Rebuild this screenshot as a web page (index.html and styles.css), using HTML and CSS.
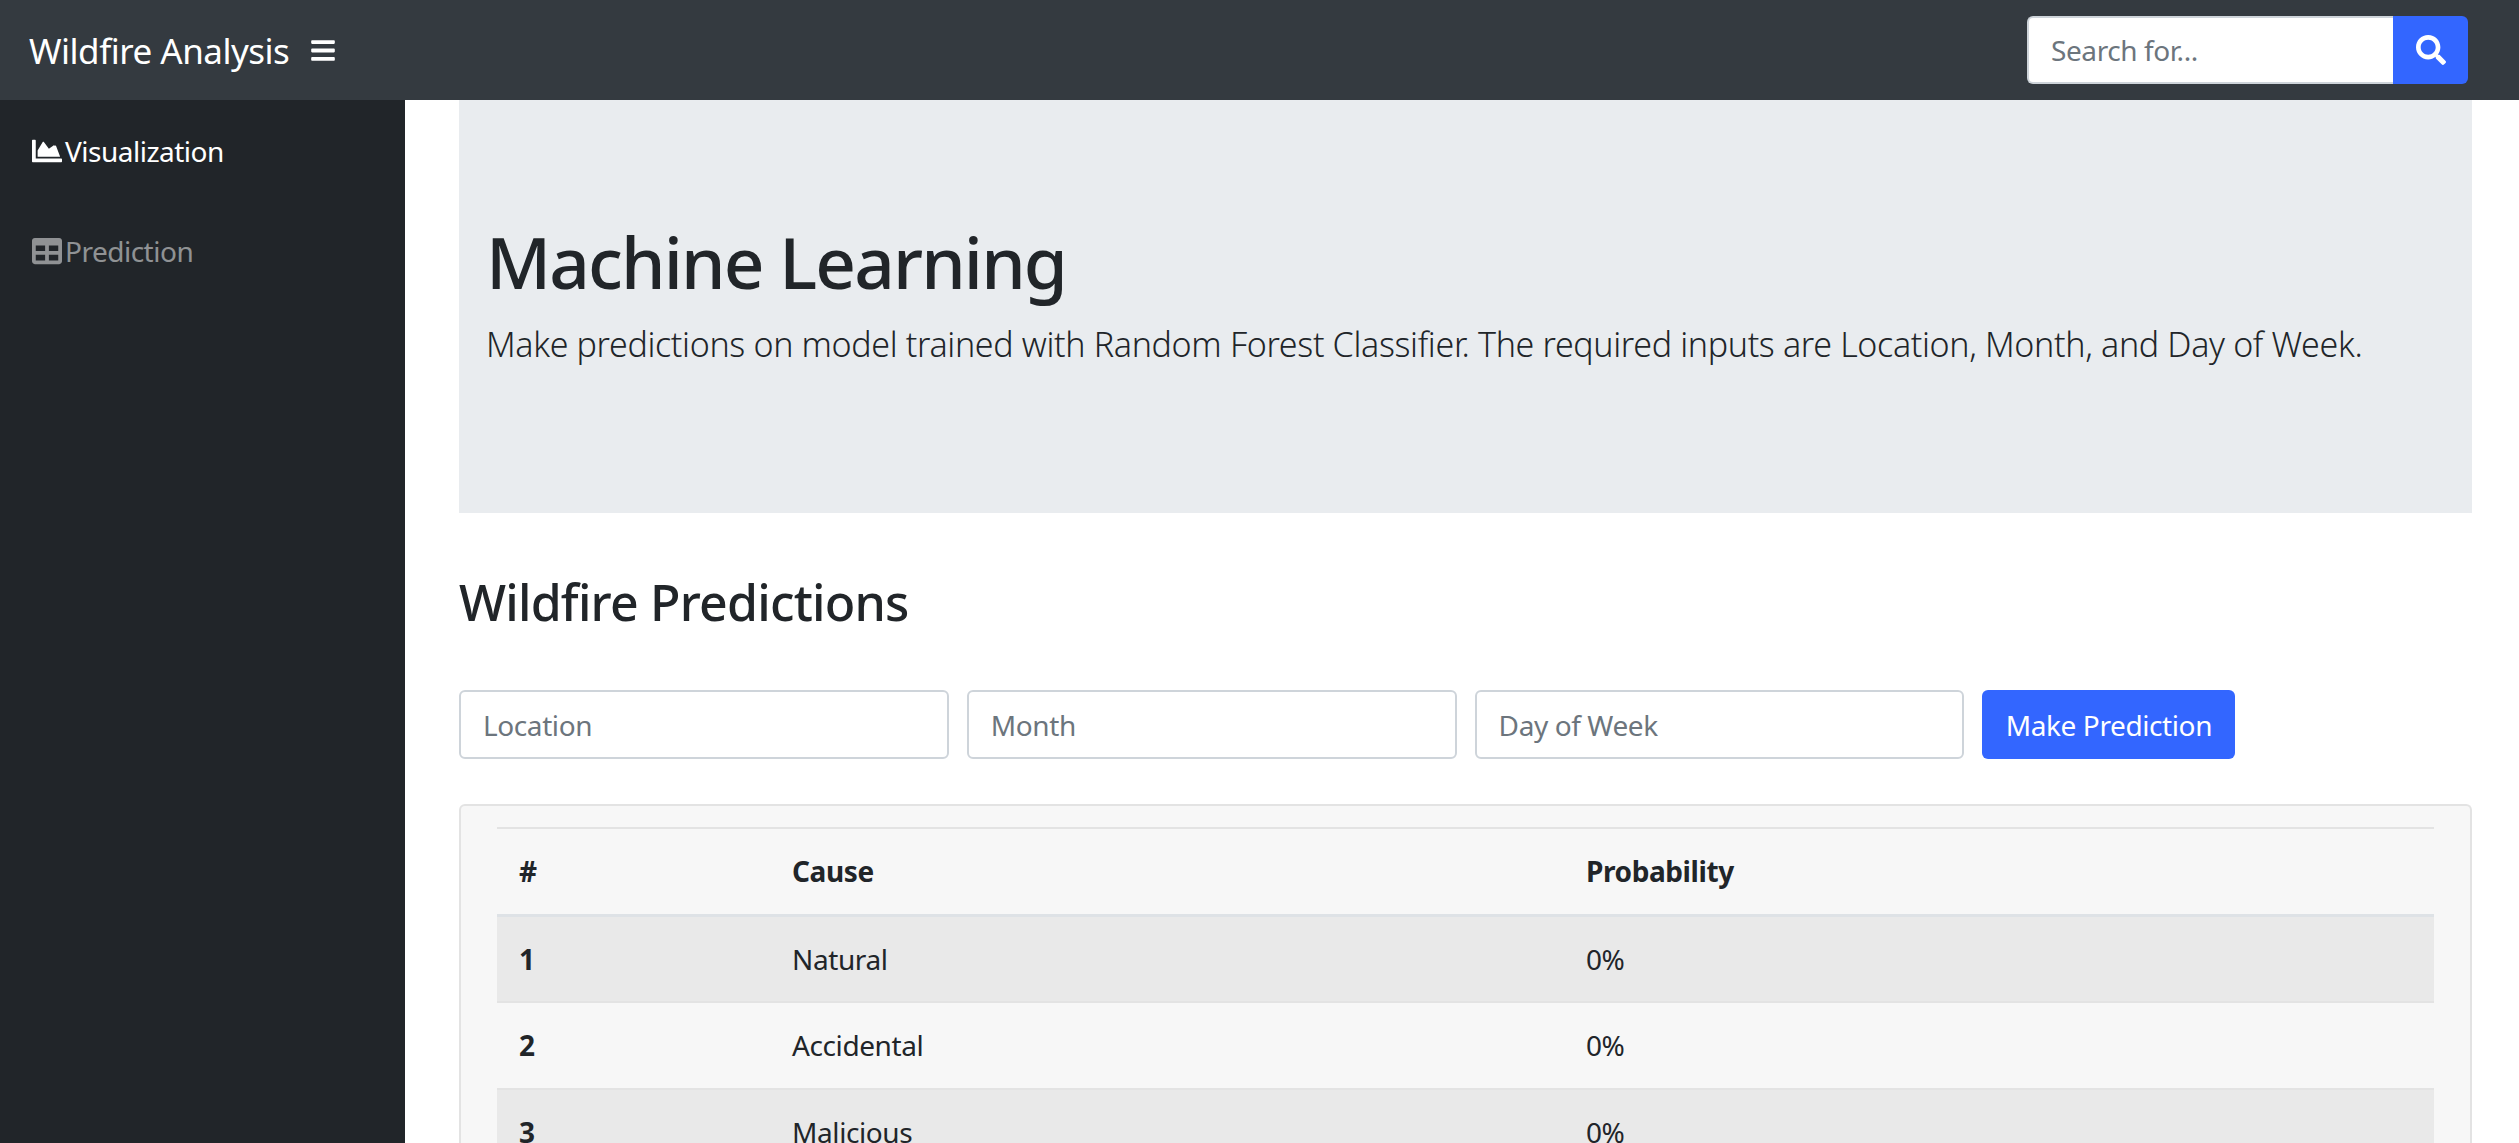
FILE: index.html
```html
<!DOCTYPE html>
<html>
    <head>
        <meta charset="utf-8">
        <title>Wildfire Analysis</title>
        <link rel="stylesheet" href="styles.css">
    </head>
    <body>
        <nav class="topnav">
            <span class="brand">Wildfire Analysis</span>
            <svg class="bars" viewBox="0 0 448 512"><path fill="currentColor" d="M16 132h416c8.837 0 16-7.163 16-16V76c0-8.837-7.163-16-16-16H16C7.163 60 0 67.163 0 76v40c0 8.837 7.163 16 16 16zm0 160h416c8.837 0 16-7.163 16-16v-40c0-8.837-7.163-16-16-16H16c-8.837 0-16 7.163-16 16v40c0 8.837 7.163 16 16 16zm0 160h416c8.837 0 16-7.163 16-16v-40c0-8.837-7.163-16-16-16H16c-8.837 0-16 7.163-16 16v40c0 8.837 7.163 16 16 16z"/></svg>
            <form class="search">
                <input class="search-input" type="text" placeholder="Search for...">
                <button class="search-btn" type="button">
                    <svg class="search-icon" viewBox="0 0 512 512"><path fill="currentColor" d="M505 442.7L405.3 343c-4.5-4.5-10.6-7-17-7H372c27.6-35.3 44-79.7 44-128C416 93.1 322.9 0 208 0S0 93.1 0 208s93.1 208 208 208c48.3 0 92.7-16.4 128-44v16.3c0 6.4 2.5 12.5 7 17l99.7 99.7c9.4 9.4 24.6 9.4 33.9 0l28.3-28.3c9.4-9.4 9.4-24.6.1-34zM208 336c-70.7 0-128-57.2-128-128 0-70.7 57.2-128 128-128 70.7 0 128 57.2 128 128 0 70.7-57.2 128-128 128z"/></svg>
                </button>
            </form>
        </nav>
        <div class="layout">
            <aside class="sidebar">
                <a class="side-link active">
                    <svg class="side-icon" viewBox="0 0 512 512"><path fill="currentColor" d="M500 384c6.6 0 12 5.4 12 12v40c0 6.6-5.4 12-12 12H12c-6.6 0-12-5.4-12-12V76c0-6.6 5.4-12 12-12h40c6.6 0 12 5.4 12 12v308h436zM372.7 159.5L288 216l-85.3-113.7c-5.1-6.8-15.5-6.3-19.9 1L96 248v104h384l-67.2-179.2c-3.2-8.6-13.9-11.9-21.5-6.3z"/></svg>Visualization
                </a>
                <a class="side-link">
                    <svg class="side-icon" viewBox="0 0 512 512"><path fill="currentColor" d="M464 32H48C21.49 32 0 53.49 0 80v352c0 26.51 21.49 48 48 48h416c26.51 0 48-21.49 48-48V80c0-26.51-21.49-48-48-48zM224 416H64v-96h160v96zm0-160H64v-96h160v96zm224 160H288v-96h160v96zm0-160H288v-96h160v96z"/></svg>Prediction
                </a>
            </aside>
            <main class="content">
                <section class="jumbotron">
                    <h1 class="title">Machine Learning</h1>
                    <p class="lead">Make predictions on model trained with Random Forest Classifier. The required inputs are Location, Month, and Day of Week.</p>
                </section>
                <h2 class="subtitle">Wildfire Predictions</h2>
                <form class="predict-form">
                    <input class="field" type="text" placeholder="Location">
                    <input class="field" type="text" placeholder="Month">
                    <input class="field" type="text" placeholder="Day of Week">
                    <button class="predict-btn" type="button">Make Prediction</button>
                </form>
                <div class="well">
                    <table class="results">
                        <thead>
                            <tr><th class="col-num">#</th><th class="col-cause">Cause</th><th>Probability</th></tr>
                        </thead>
                        <tbody>
                            <tr><th>1</th><td>Natural</td><td>0%</td></tr>
                            <tr><th>2</th><td>Accidental</td><td>0%</td></tr>
                            <tr><th>3</th><td>Malicious</td><td>0%</td></tr>
                        </tbody>
                    </table>
                </div>
            </main>
        </div>
    </body>
</html>
```

FILE: styles.css
```css
html, body {
    margin: 0;
    height: 100%;
    overflow: hidden;
}

body {
    font-family: "Noto Sans", "Open Sans", sans-serif;
    font-size: 28px;
    color: #212529;
    background: #fff;
}

.topnav {
    height: 100px;
    display: flex;
    align-items: center;
    padding: 0 51px 0 29px;
    background: #343a40;
    color: #fff;
}

.brand {
    font-size: 35px;
    letter-spacing: -0.5px;
}

.bars {
    width: 24px;
    height: 27px;
    margin-left: 22px;
}

.search {
    display: flex;
    margin-left: auto;
    height: 68px;
}

.search-input {
    width: 366px;
    box-sizing: border-box;
    padding: 0 22px;
    border: 2px solid #ced4da;
    border-right: 0;
    border-radius: 6px 0 0 6px;
    font: inherit;
    letter-spacing: -0.4px;
    background: #fff;
}

.search-input::placeholder, .field::placeholder {
    color: #6c757d;
    opacity: 1;
}

.search-btn {
    width: 75px;
    border: 0;
    padding: 0;
    border-radius: 0 6px 6px 0;
    background: #3366ff;
    color: #fff;
}

.search-icon {
    width: 30px;
    height: 30px;
    display: block;
    margin: 0 auto;
}

.layout {
    display: flex;
    height: 1043px;
}

.sidebar {
    width: 405px;
    flex: none;
    padding-top: 19px;
    background: #212529;
    box-sizing: border-box;
}

.side-link {
    display: flex;
    align-items: center;
    height: 64px;
    margin-bottom: 36px;
    padding-left: 32px;
    font-size: 28px;
    letter-spacing: -0.5px;
    color: rgba(255, 255, 255, .5);
}

.side-link.active {
    color: #fff;
}

.side-icon {
    width: 30px;
    height: 30px;
    margin-right: 3px;
    flex: none;
}

.content {
    flex: 1;
    padding: 0 47px 0 54px;
    overflow: hidden;
}

.jumbotron {
    height: 413px;
    box-sizing: border-box;
    padding: 112px 27px 0;
    background: #e9ecef;
}

.title {
    margin: 0;
    font-size: 71px;
    font-weight: 540;
    line-height: 100px;
    letter-spacing: -1.85px;
}

.lead {
    margin: 6px 0 0;
    font-size: 34px;
    font-weight: 300;
    line-height: 52px;
    letter-spacing: -0.34px;
}

.subtitle {
    margin: 59px 0 58px;
    font-size: 50px;
    font-weight: 540;
    line-height: 60px;
    letter-spacing: -0.8px;
}

.predict-form {
    display: flex;
    gap: 18px;
    height: 69px;
}

.field {
    width: 489.8px;
    box-sizing: border-box;
    padding: 0 22px;
    border: 2px solid #ced4da;
    border-radius: 6px;
    font: inherit;
    letter-spacing: -0.4px;
}

.predict-btn {
    width: 253px;
    border: 0;
    border-radius: 6px;
    background: #3366ff;
    color: #fff;
    font: inherit;
    letter-spacing: -0.4px;
}

.well {
    margin-top: 45px;
    padding: 21px 36px 0;
    border: 2px solid #e3e3e3;
    border-bottom: 0;
    border-radius: 6px 6px 0 0;
    background: #f7f7f7;
    box-sizing: border-box;
    height: 400px;
}

.results {
    width: 100%;
    border-collapse: collapse;
    letter-spacing: -0.4px;
}

.results th, .results td {
    height: 84.5px;
    padding: 0 22px;
    text-align: left;
    border-top: 2px solid #e3e3e3;
}

.results thead th {
    border-bottom: 3px solid #dee2e6;
}

.results tbody tr:nth-child(odd) {
    background: #e9e9e9;
}

.col-num {
    width: 229px;
}

.col-cause {
    width: 750px;
}
```
